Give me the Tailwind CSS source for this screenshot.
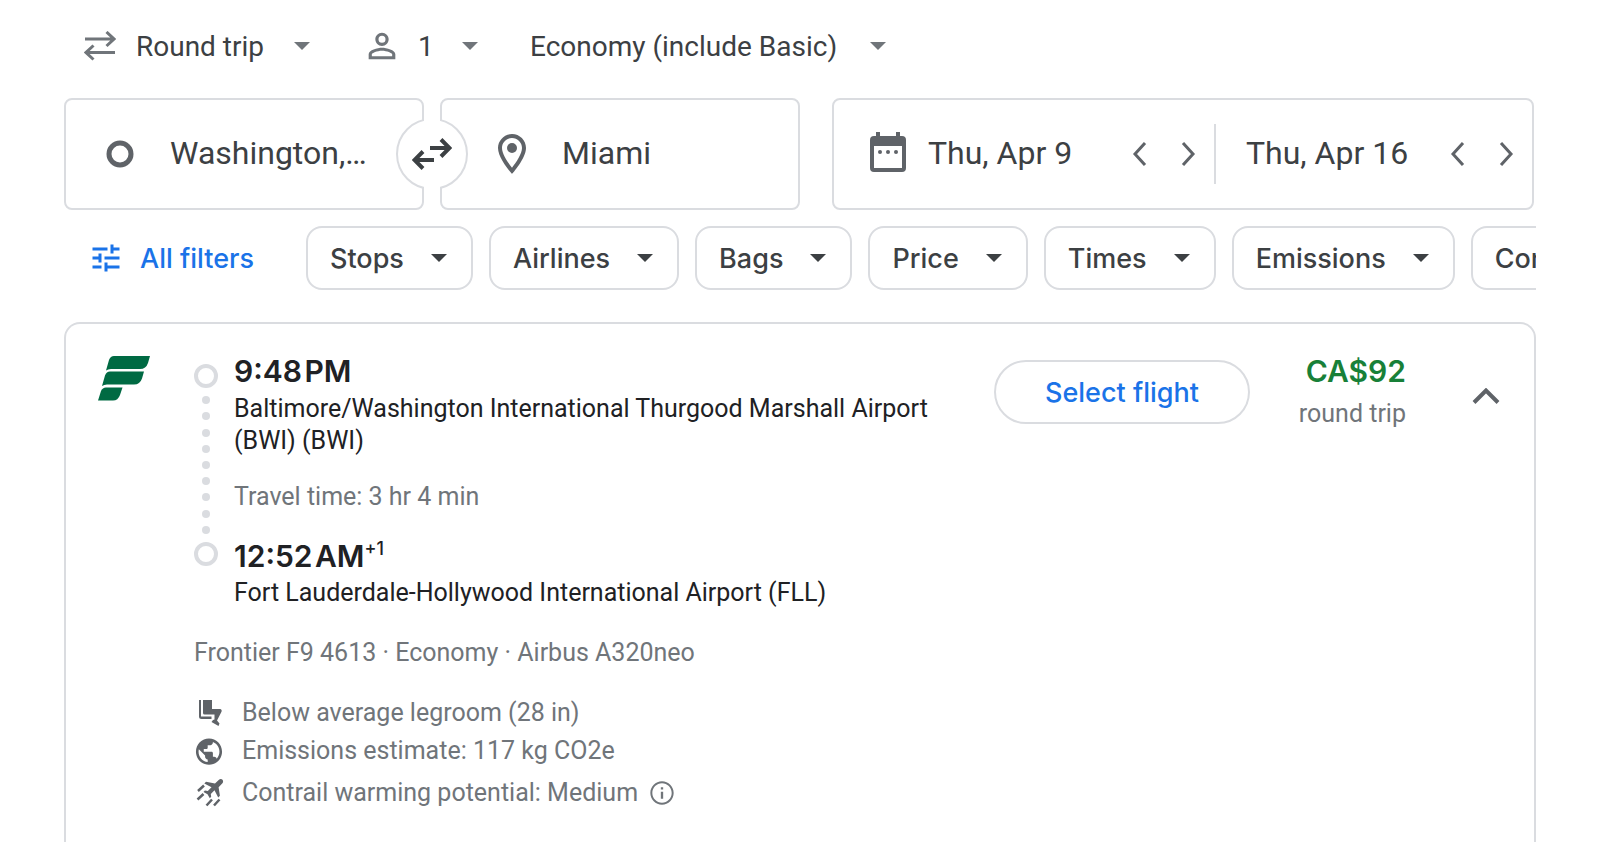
<!DOCTYPE html>
<html lang="en">
<head>
    <meta charset="UTF-8">
    <meta name="viewport" content="width=device-width, initial-scale=1.0">
    <title>Flights: Washington to Miami</title>
    <script src="https://cdn.jsdelivr.net/npm/@tailwindcss/browser@4"></script>
</head>
<body class="bg-white text-[#3c4043] font-['Roboto',sans-serif]">
    <div class="flex h-screen flex-col overflow-hidden px-16">

        <!-- Trip options -->
        <div class="mt-[22px] mb-7 flex h-12 shrink-0 items-center pl-5 text-[28px]">
            <label class="relative flex items-center gap-5" aria-label="Trip type">
                <svg class="h-[30px] w-8" viewBox="0 0 32 30" fill="none" stroke="#70757a" stroke-width="3">
                    <path d="M1 8H30M22.500 1L30 8L22.500 15M31 21.500H2M9.500 14.500L2 21.500L9.500 28.500"/>
                </svg>
                <select class="w-[174px] appearance-none bg-transparent pt-0.5">
                    <option>Round trip</option>
                    <option>One way</option>
                    <option>Multi-city</option>
                </select>
                <svg class="pointer-events-none absolute right-0 h-2 w-4" viewBox="0 0 16 8" fill="#70757a"><path d="M0 0H16L8 8Z"/></svg>
            </label>
            <label class="relative ml-[52px] flex items-center gap-4" aria-label="Passengers">
                <svg class="size-10" viewBox="0 0 24 24" fill="#70757a">
                    <path d="M12 5.900a2.100 2.100 0 1 1 0 4.200 2.100 2.100 0 0 1 0-4.200m0 9c2.970 0 6.100 1.460 6.100 2.100v1.100H5.900V17c0-.64 3.130-2.100 6.100-2.100M12 4C9.790 4 8 5.790 8 8s1.790 4 4 4 4-1.790 4-4-1.790-4-4-4zm0 9c-2.670 0-8 1.340-8 4v3h16v-3c0-2.660-5.330-4-8-4z"/>
                </svg>
                <select class="w-[60px] appearance-none bg-transparent pt-0.5">
                    <option>1</option>
                    <option>2</option>
                </select>
                <svg class="pointer-events-none absolute right-0 h-2 w-4" viewBox="0 0 16 8" fill="#70757a"><path d="M0 0H16L8 8Z"/></svg>
            </label>
            <label class="relative ml-[52px] flex items-center" aria-label="Cabin class">
                <select class="w-[356px] appearance-none bg-transparent pt-0.5">
                    <option>Economy (include Basic)</option>
                    <option>Business</option>
                </select>
                <svg class="pointer-events-none absolute right-0 h-2 w-4" viewBox="0 0 16 8" fill="#70757a"><path d="M0 0H16L8 8Z"/></svg>
            </label>
        </div>

        <!-- Search fields -->
        <div class="flex h-28 shrink-0 gap-8 pr-0.5 text-[32px]">
            <div class="relative grid flex-[736] grid-cols-2 gap-4">
                <label class="flex items-center rounded-lg border-2 border-[#dadce0] pl-10" aria-label="Where from?">
                    <svg class="size-7 shrink-0" viewBox="0 0 28 28" fill="none" stroke="#5f6368" stroke-width="5"><circle cx="14" cy="14" r="11"/></svg>
                    <input class="ml-9 w-52 min-w-0 bg-transparent pb-0.5" type="text" value="Washington,…">
                </label>
                <label class="flex items-center rounded-lg border-2 border-[#dadce0] pl-[46px]" aria-label="Where to?">
                    <svg class="size-12 shrink-0" viewBox="0 0 24 24" fill="#5f6368">
                        <path d="M12 2C8.130 2 5 5.130 5 9c0 5.250 7 13 7 13s7-7.750 7-13c0-3.870-3.130-7-7-7zM7 9c0-2.760 2.240-5 5-5s5 2.240 5 5c0 2.880-2.880 7.190-5 9.880C9.920 16.210 7 11.850 7 9z"/>
                        <circle cx="12" cy="9" r="2.500"/>
                    </svg>
                    <input class="ml-[26px] w-52 min-w-0 bg-transparent pb-0.5" type="text" value="Miami">
                </label>
                <button class="absolute top-1/2 left-1/2 flex size-[72px] -translate-1/2 items-center justify-center rounded-full border-2 border-[#dadce0] bg-white before:absolute before:-inset-y-1 before:left-1/2 before:-ml-2 before:w-4 before:bg-white" aria-label="Swap origin and destination">
                    <svg class="relative h-8 w-10" viewBox="0 0 40 32" fill="none" stroke="#3c4043" stroke-width="4">
                        <path d="M18 10H37M29 1.500L37.500 10L29 18.500M22 22H3M11 13.500L2.500 22L11 30.500"/>
                    </svg>
                </button>
            </div>
            <div class="flex flex-[698] items-center rounded-lg border-2 border-[#dadce0]">
                <div class="flex flex-[342] items-center pr-0.5 pl-9">
                    <svg class="mb-1 h-10 w-9 shrink-0" viewBox="0 0 36 40" fill="#5f6368">
                        <path fill-rule="evenodd" d="M6 0h4v4h16V0h4v4h2a4 4 0 0 1 4 4v28a4 4 0 0 1-4 4H4a4 4 0 0 1-4-4V8a4 4 0 0 1 4-4h2zM4 14v22h28V14z"/>
                        <circle cx="10" cy="20" r="2"/><circle cx="18" cy="20" r="2"/><circle cx="26" cy="20" r="2"/>
                    </svg>
                    <input class="ml-[22px] w-0 min-w-0 flex-1 bg-transparent pb-0.5" type="text" value="Thu, Apr 9" aria-label="Departure">
                    <button class="flex size-12 items-center justify-center" aria-label="Departure one day earlier">
                        <svg class="h-6 w-4" viewBox="0 0 16 24" fill="none" stroke="#5f6368" stroke-width="3"><path d="M13 1L3 12L13 23"/></svg>
                    </button>
                    <button class="flex size-12 items-center justify-center" aria-label="Departure one day later">
                        <svg class="h-6 w-4" viewBox="0 0 16 24" fill="none" stroke="#5f6368" stroke-width="3"><path d="M3 1L13 12L3 23"/></svg>
                    </button>
                </div>
                <div class="h-[60px] w-0.5 bg-[#dadce0]"></div>
                <div class="flex flex-[284] items-center pr-0.5 pl-[30px]">
                    <input class="w-0 min-w-0 flex-1 bg-transparent pb-0.5" type="text" value="Thu, Apr 16" aria-label="Return">
                    <button class="flex size-12 items-center justify-center" aria-label="Return one day earlier">
                        <svg class="h-6 w-4" viewBox="0 0 16 24" fill="none" stroke="#5f6368" stroke-width="3"><path d="M13 1L3 12L13 23"/></svg>
                    </button>
                    <button class="flex size-12 items-center justify-center" aria-label="Return one day later">
                        <svg class="h-6 w-4" viewBox="0 0 16 24" fill="none" stroke="#5f6368" stroke-width="3"><path d="M3 1L13 12L3 23"/></svg>
                    </button>
                </div>
            </div>
        </div>

        <div class="mt-4 flex h-16 shrink-0 gap-4 overflow-hidden font-['Inter',sans-serif] text-[27px] font-medium whitespace-nowrap">
            <button class="flex w-[226px] shrink-0 items-center gap-4 pl-6 text-[#1a73e8]">
                <svg class="size-9 shrink-0" viewBox="0 0 24 24" fill="currentColor">
                    <path d="M3 17v2h6v-2H3zM3 5v2h10V5H3zm10 16v-2h8v-2h-8v-2h-2v6h2zM7 9v2H3v2h4v2h2V9H7zm14 4v-2H11v2h10zm-6-4h2V7h4V5h-4V3h-2v6z"/>
                </svg>
                <span class="pt-0.5">All filters</span>
            </button>
            <button class="flex shrink-0 items-center gap-[27px] rounded-2xl border-2 border-[#dadce0] pr-6 pl-[22px]">
                <span class="pt-0.5">Stops</span>
                <svg class="h-2 w-4" viewBox="0 0 16 8" fill="currentColor"><path d="M0 0H16L8 8Z"/></svg>
            </button>
            <button class="flex shrink-0 items-center gap-[27px] rounded-2xl border-2 border-[#dadce0] pr-6 pl-[22px]">
                <span class="pt-0.5">Airlines</span>
                <svg class="h-2 w-4" viewBox="0 0 16 8" fill="currentColor"><path d="M0 0H16L8 8Z"/></svg>
            </button>
            <button class="flex shrink-0 items-center gap-[27px] rounded-2xl border-2 border-[#dadce0] pr-6 pl-[22px]">
                <span class="pt-0.5">Bags</span>
                <svg class="h-2 w-4" viewBox="0 0 16 8" fill="currentColor"><path d="M0 0H16L8 8Z"/></svg>
            </button>
            <button class="flex shrink-0 items-center gap-[27px] rounded-2xl border-2 border-[#dadce0] pr-6 pl-[22px]">
                <span class="pt-0.5">Price</span>
                <svg class="h-2 w-4" viewBox="0 0 16 8" fill="currentColor"><path d="M0 0H16L8 8Z"/></svg>
            </button>
            <button class="flex shrink-0 items-center gap-[27px] rounded-2xl border-2 border-[#dadce0] pr-6 pl-[22px]">
                <span class="pt-0.5">Times</span>
                <svg class="h-2 w-4" viewBox="0 0 16 8" fill="currentColor"><path d="M0 0H16L8 8Z"/></svg>
            </button>
            <button class="flex shrink-0 items-center gap-[27px] rounded-2xl border-2 border-[#dadce0] pr-6 pl-[22px]">
                <span class="pt-0.5">Emissions</span>
                <svg class="h-2 w-4" viewBox="0 0 16 8" fill="currentColor"><path d="M0 0H16L8 8Z"/></svg>
            </button>
            <button class="flex shrink-0 items-center gap-[27px] rounded-2xl border-2 border-[#dadce0] pr-6 pl-[22px]">
                <span class="pt-0.5">Connecting airports</span>
                <svg class="h-2 w-4" viewBox="0 0 16 8" fill="currentColor"><path d="M0 0H16L8 8Z"/></svg>
            </button>
        </div>

        <!-- Flight card -->
        <main class="mt-8 flex flex-1 items-start rounded-t-2xl border-2 border-b-0 border-[#dadce0] pl-8 text-[25px] leading-8">
            <div class="w-24 shrink-0 pt-8">
                <svg class="h-[45px] w-[52px]" viewBox="0 0 52 45" fill="#006a43">
                    <path d="M8 14.500L11 4Q12.500 0 16 0H52L50 7Q48 13 42 13H13Q10 13 8 14.500Z"/>
                    <path d="M4 30L7 19.500Q8.500 15.500 12 15.500H46L44 22.500Q42 28.500 36 28.500H9Q6 28.500 4 30Z"/>
                    <path d="M0 44.500L3 35Q4.500 31.500 8 31.500H24.500L22 39Q20 44.500 15 44.500Z"/>
                </svg>
            </div>

            <div class="flex-1 pt-7">
                <div class="flex gap-4">
                    <div class="mt-3 flex h-[202px] w-6 shrink-0 flex-col items-center justify-between">
                        <span class="size-6 rounded-full border-4 border-[#dadce0]"></span>
                        <span class="size-2 rounded-full bg-[#dadce0]"></span>
                        <span class="size-2 rounded-full bg-[#dadce0]"></span>
                        <span class="size-2 rounded-full bg-[#dadce0]"></span>
                        <span class="size-2 rounded-full bg-[#dadce0]"></span>
                        <span class="size-2 rounded-full bg-[#dadce0]"></span>
                        <span class="size-2 rounded-full bg-[#dadce0]"></span>
                        <span class="size-2 rounded-full bg-[#dadce0]"></span>
                        <span class="size-2 rounded-full bg-[#dadce0]"></span>
                        <span class="size-2 rounded-full bg-[#dadce0]"></span>
                        <span class="size-6 rounded-full border-4 border-[#dadce0]"></span>
                    </div>
                    <div class="text-[#202124]">
                        <p class="mb-[3px] font-['Inter',sans-serif] text-[30px] leading-[38px] font-semibold">9:48&#8202;PM</p>
                        <p>Baltimore/Washington International Thurgood Marshall Airport (BWI) (BWI)</p>
                        <p class="mt-6 text-[#70757a]">Travel time: 3 hr 4 min</p>
                        <p class="mt-6 mb-0.5 flex font-['Inter',sans-serif] text-[30px] leading-[38px] font-semibold">12:52&#8202;AM<span class="text-[18px] leading-6 font-medium">+1</span></p>
                        <p>Fort Lauderdale-Hollywood International Airport (FLL)</p>
                    </div>
                </div>

                <p class="mt-7 text-[#70757a]">Frontier F9 4613 · Economy · Airbus A320neo</p>

                <ul class="mt-7 text-[#70757a]">
                    <li class="flex items-center gap-[18px]">
                        <svg class="size-[30px]" viewBox="0 0 30 30" fill="#5f6368">
                            <path d="M5 2h2v16.500h10.500V21H7.500A2.500 2.500 0 0 1 5 18.500z"/>
                            <path d="M9 2h9v9h8q2.300.5 1.500 2.800L23 22.500l2.500 3-1 2.500-7-4 1.500-2 1.500-.5v-5H10.500A1.500 1.500 0 0 1 9 15z"/>
                        </svg>
                        Below average legroom (28 in)
                    </li>
                    <li class="mt-1.5 flex items-center gap-[18px]">
                        <svg class="size-[30px]" viewBox="0.500 0 23 23" fill="#5f6368">
                            <path d="M12 2C6.480 2 2 6.480 2 12s4.480 10 10 10 10-4.480 10-10S17.520 2 12 2zM4 12c0-.61.08-1.210.21-1.780L8.990 15v1c0 1.100.9 2 2 2v1.930C7.060 19.430 4 16.070 4 12zm13.890 5.400c-.26-.81-1-1.400-1.900-1.400h-1v-3c0-.55-.45-1-1-1h-6v-2h2c.55 0 1-.45 1-1V7h2c1.100 0 2-.9 2-2v-.41C17.920 5.770 20 8.650 20 12c0 2.080-.81 3.980-2.110 5.400z"/>
                        </svg>
                        Emissions estimate: 117 kg CO2e
                    </li>
                    <li class="mt-2.5 flex items-center gap-[18px]">
                        <svg class="size-[30px]" viewBox="0 0 30 30" fill="#5f6368">
                            <path d="M28.500 1.700c-1.100-1-2.800-.7-3.800.3L21 5.600 12 3.700 10.300 5.400l7.200 3.900-3.700 3.700-2.900-.5-1.400 1.400 4 2.300 2.300 4 1.400-1.400-.4-2.900 3.700-3.700 3.700 7.300 1.700-1.700L24.600 9.200l3.600-3.700c1-1 1.300-2.800.3-3.800z"/>
                            <path d="M10 7.500L4 13M9.500 16L3.500 21.500M18 21.500L12.500 27.500M25.500 21.500L20 27.500" fill="none" stroke="#5f6368" stroke-width="2.500"/>
                        </svg>
                        <span>Contrail warming potential: Medium</span>
                        <button class="-ml-2" aria-label="More about contrail warming potential">
                            <svg class="size-7" viewBox="0 0 24 24" fill="#70757a">
                                <path d="M11 7h2v2h-2zm0 4h2v6h-2zm1-9C6.480 2 2 6.480 2 12s4.480 10 10 10 10-4.480 10-10S17.520 2 12 2zm0 18.300c-4.580 0-8.300-3.720-8.300-8.300S7.420 3.700 12 3.700s8.300 3.720 8.300 8.300-3.720 8.300-8.300 8.300z"/>
                            </svg>
                        </button>
                    </li>
                </ul>
            </div>

            <button class="mt-9 ml-8 h-16 w-64 shrink-0 rounded-full border-2 border-[#dadce0] pt-0.5 font-['Inter',sans-serif] text-[27px] font-medium text-[#1a73e8]">Select flight</button>
            <div class="w-[156px] shrink-0 pt-7 text-right">
                <p class="mb-[3px] font-['Inter',sans-serif] text-[30px] leading-[38px] font-semibold text-[#188038]">CA$92</p>
                <p class="mt-2 text-[#70757a]">round trip</p>
            </div>
            <button class="mt-10 mr-4 ml-12 flex size-16 shrink-0 items-center justify-center" aria-label="Hide flight details">
                <svg class="h-4 w-7" viewBox="0 0 28 16" fill="none" stroke="#5f6368" stroke-width="4"><path d="M2 14.500L14 2.500L26 14.500"/></svg>
            </button>
        </main>
    </div>
</body>
</html>
